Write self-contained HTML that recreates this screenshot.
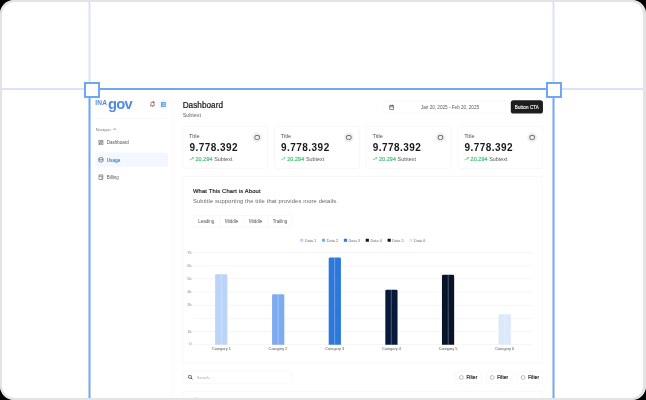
<!DOCTYPE html>
<html><head><meta charset="utf-8">
<style>
*{box-sizing:border-box;margin:0;padding:0}
html,body{width:646px;height:400px;overflow:hidden;background:#000}
body{position:relative;font-family:"Liberation Sans",sans-serif}
.frame{position:absolute;left:0;top:0;width:646px;height:400px;border-radius:14px;background:#e3e3e3;overflow:hidden}
.inner{position:absolute;left:2px;top:2px;right:3px;bottom:2px;border-radius:12px;background:#fff}
.bord{position:absolute;left:0;top:0;width:646px;height:400px;border-radius:14px;border:2px solid #e3e3e3;border-right-width:3px}
.app{position:absolute;left:90px;top:90px;width:1440px;height:1000px;transform-origin:0 0;transform:scale(0.3217);color:#1a1a1a}
.abs{position:absolute}
.side{position:absolute;left:0;top:0;width:256px;height:1000px;border-right:1px solid #f0f0f0}
.card{position:absolute;border:1px solid #e6e6e6;border-radius:8px;background:#fff}
</style></head>
<body>
<div class="frame">
<div class="inner"></div>
<div class="app">
  <div class="side">
    <div class="abs" style="left:16.5px;top:30.5px;font-weight:700;font-size:20.5px;letter-spacing:0.4px;color:#4f8ae6;line-height:20px">INA</div>
    <div class="abs" style="left:56px;top:19px;font-weight:700;font-size:46px;letter-spacing:-2.6px;color:#4f8ae6;line-height:46px">gov</div>
    <!-- bell -->
    <svg class="abs" style="left:184px;top:33px" width="20" height="22" viewBox="0 0 20 22">
      <path d="M5 14 V9.5 a5 5 0 0 1 10 0 V14 L16.5 16 H3.5 L5 14 M8.2 18.5 h3.6" fill="none" stroke="#333" stroke-width="1.7" stroke-linejoin="round"/>
      <circle cx="13.5" cy="5" r="3" fill="#ef2b2b"/>
    </svg>
    <div class="abs" style="left:214px;top:31px;width:27px;height:27px;border-radius:5px;background:#f2f6fe"></div>
    <svg class="abs" style="left:220px;top:37px" width="16" height="16" viewBox="0 0 16 16">
      <rect x="0" y="0" width="16" height="16" rx="2" fill="#72a3ea"/>
      <rect x="6" y="5" width="6" height="2" fill="#fff"/>
      <rect x="6" y="10.5" width="7" height="2" fill="#fff"/>
    </svg>
    <div class="abs" style="left:16px;top:88px;width:224px;height:1px;background:#ececec"></div>
    <div class="abs" style="left:18px;top:116px;font-size:12px;color:#777;line-height:14px">Navigasi</div>
    <svg class="abs" style="left:70px;top:118px" width="14" height="8" viewBox="0 0 14 8"><path d="M2 6.5 L7 2 L12 6.5" fill="none" stroke="#666" stroke-width="2"/></svg>
    <!-- nav -->
    <svg class="abs" style="left:25px;top:154px" width="18" height="18" viewBox="0 0 24 24"><g fill="none" stroke="#555" stroke-width="2.6" stroke-linejoin="round"><rect x="3" y="3" width="7" height="9" rx="1"/><rect x="14" y="3" width="7" height="5" rx="1"/><rect x="14" y="12" width="7" height="9" rx="1"/><rect x="3" y="16" width="7" height="5" rx="1"/></g></svg>
    <div class="abs" style="left:52px;top:154px;font-size:14px;color:#555;line-height:16px">Dashboard</div>
    <div class="abs" style="left:17px;top:194px;width:225px;height:45px;border-radius:8px;background:#f3f7fe"></div>
    <svg class="abs" style="left:25px;top:208px" width="18" height="18" viewBox="0 0 24 24"><g fill="none" stroke="#444" stroke-width="2.8"><rect x="3" y="2.5" width="18" height="19" rx="7"/><path d="M3 12H21"/></g></svg>
    <div class="abs" style="left:52px;top:211px;font-size:14px;font-weight:700;color:#3b7ddd;line-height:16px">Usage</div>
    <svg class="abs" style="left:26px;top:262px" width="16" height="18" viewBox="0 0 21 24"><g fill="none" stroke="#555" stroke-width="2.8"><rect x="2" y="2" width="17" height="20" rx="1.5"/><path d="M2 8H19 M11 15H19"/></g></svg>
    <div class="abs" style="left:52px;top:263px;font-size:14px;color:#555;line-height:16px">Billing</div>
  </div>

  <!-- header -->
  <div class="abs" style="left:288px;top:33px;font-size:25.5px;font-weight:400;letter-spacing:0.1px;-webkit-text-stroke:0.7px #1a1a1a;line-height:28px;color:#1a1a1a">Dashboard</div>
  <div class="abs" style="left:288px;top:70px;font-size:16.8px;line-height:18px;color:#666">Subtext</div>
  <div class="abs" style="left:913px;top:32px;width:380px;height:40px;border:1px solid #ececec;border-radius:8px"></div>
  <svg class="abs" style="left:930px;top:45px" width="15" height="17" viewBox="0 0 15 17"><rect x="1" y="3" width="13" height="13" rx="2" fill="none" stroke="#333" stroke-width="2"/><path d="M1 7.5H14 M4.5 0V4 M10.5 0V4" stroke="#333" stroke-width="2"/></svg>
  <div class="abs" style="left:945px;top:46px;width:348px;text-align:center;font-size:14.4px;line-height:16px;color:#555">Jan 20, 2025 - Feb 20, 2025</div>
  <div class="abs" style="left:1308px;top:32px;width:100px;height:41px;border-radius:8px;background:#1e1e1e"></div><div class="abs" style="left:1308px;top:32px;width:100px;height:41px;color:#fff;font-size:14px;line-height:45px;text-align:center;-webkit-text-stroke:0.35px #fff;letter-spacing:0.35px;filter:grayscale(1)">Button CTA</div>

  <!-- stat cards -->
  <div class="card" style="left:288px;top:112.7px;width:265px;height:131.3px"></div>
  <div class="card" style="left:573px;top:112.7px;width:265px;height:131.3px"></div>
  <div class="card" style="left:858px;top:112.7px;width:265px;height:131.3px"></div>
  <div class="card" style="left:1143px;top:112.7px;width:265px;height:131.3px"></div>
    <div class="abs" style="left:308px;top:134px;font-size:17.5px;line-height:18px;color:#555">Title</div>
  <div class="abs" style="left:504px;top:132px;width:31px;height:31px;border-radius:50%;background:#efefef"></div>
  <div class="abs" style="left:511px;top:140px;width:17px;height:15px;border-radius:50%;border:2.2px solid #555"></div>
  <div class="abs" style="left:309px;top:164.4px;font-size:31.1px;font-weight:700;letter-spacing:1.4px;line-height:30px;color:#1a1a1a">9.778.392</div>
  <svg class="abs" style="left:308px;top:208px" width="15" height="12" viewBox="0 0 15 12"><path d="M1 11 L5 6 L8 8 L13 2 M9 2 H13 V6" fill="none" stroke="#3cc26a" stroke-width="2"/></svg>
  <div class="abs" style="left:328px;top:206px;font-size:16.8px;line-height:18px;font-weight:400;-webkit-text-stroke:0.5px #3cc26a;letter-spacing:0.3px;color:#3cc26a">20.294 <span style="-webkit-text-stroke:0;letter-spacing:0;color:#555">Subtext</span></div>
  <div class="abs" style="left:593px;top:134px;font-size:17.5px;line-height:18px;color:#555">Title</div>
  <div class="abs" style="left:789px;top:132px;width:31px;height:31px;border-radius:50%;background:#efefef"></div>
  <div class="abs" style="left:796px;top:140px;width:17px;height:15px;border-radius:50%;border:2.2px solid #555"></div>
  <div class="abs" style="left:594px;top:164.4px;font-size:31.1px;font-weight:700;letter-spacing:1.4px;line-height:30px;color:#1a1a1a">9.778.392</div>
  <svg class="abs" style="left:593px;top:208px" width="15" height="12" viewBox="0 0 15 12"><path d="M1 11 L5 6 L8 8 L13 2 M9 2 H13 V6" fill="none" stroke="#3cc26a" stroke-width="2"/></svg>
  <div class="abs" style="left:613px;top:206px;font-size:16.8px;line-height:18px;font-weight:400;-webkit-text-stroke:0.5px #3cc26a;letter-spacing:0.3px;color:#3cc26a">20.294 <span style="-webkit-text-stroke:0;letter-spacing:0;color:#555">Subtext</span></div>
  <div class="abs" style="left:878px;top:134px;font-size:17.5px;line-height:18px;color:#555">Title</div>
  <div class="abs" style="left:1074px;top:132px;width:31px;height:31px;border-radius:50%;background:#efefef"></div>
  <div class="abs" style="left:1081px;top:140px;width:17px;height:15px;border-radius:50%;border:2.2px solid #555"></div>
  <div class="abs" style="left:879px;top:164.4px;font-size:31.1px;font-weight:700;letter-spacing:1.4px;line-height:30px;color:#1a1a1a">9.778.392</div>
  <svg class="abs" style="left:878px;top:208px" width="15" height="12" viewBox="0 0 15 12"><path d="M1 11 L5 6 L8 8 L13 2 M9 2 H13 V6" fill="none" stroke="#3cc26a" stroke-width="2"/></svg>
  <div class="abs" style="left:898px;top:206px;font-size:16.8px;line-height:18px;font-weight:400;-webkit-text-stroke:0.5px #3cc26a;letter-spacing:0.3px;color:#3cc26a">20.294 <span style="-webkit-text-stroke:0;letter-spacing:0;color:#555">Subtext</span></div>
  <div class="abs" style="left:1163px;top:134px;font-size:17.5px;line-height:18px;color:#555">Title</div>
  <div class="abs" style="left:1359px;top:132px;width:31px;height:31px;border-radius:50%;background:#efefef"></div>
  <div class="abs" style="left:1366px;top:140px;width:17px;height:15px;border-radius:50%;border:2.2px solid #555"></div>
  <div class="abs" style="left:1164px;top:164.4px;font-size:31.1px;font-weight:700;letter-spacing:1.4px;line-height:30px;color:#1a1a1a">9.778.392</div>
  <svg class="abs" style="left:1163px;top:208px" width="15" height="12" viewBox="0 0 15 12"><path d="M1 11 L5 6 L8 8 L13 2 M9 2 H13 V6" fill="none" stroke="#3cc26a" stroke-width="2"/></svg>
  <div class="abs" style="left:1183px;top:206px;font-size:16.8px;line-height:18px;font-weight:400;-webkit-text-stroke:0.5px #3cc26a;letter-spacing:0.3px;color:#3cc26a">20.294 <span style="-webkit-text-stroke:0;letter-spacing:0;color:#555">Subtext</span></div>

  <!-- chart card -->
  <div class="card" style="left:288px;top:268px;width:1120px;height:582px"></div>
  <div class="abs" style="left:320px;top:302.8px;font-size:18px;font-weight:400;letter-spacing:0.5px;-webkit-text-stroke:0.55px #1a1a1a;line-height:20px;color:#1a1a1a">What This Chart is About</div>
  <div class="abs" style="left:320px;top:335px;font-size:18px;letter-spacing:0.4px;line-height:20px;color:#666">Subtitle supporting the title that provides more details.</div>
  <div class="abs" style="left:320px;top:390px;width:309px;height:37px;border:1px solid #ececec;border-radius:6px"></div>
  <div class="abs" style="left:403px;top:390px;width:1px;height:37px;background:#ececec"></div>
  <div class="abs" style="left:478px;top:390px;width:1px;height:37px;background:#ececec"></div>
  <div class="abs" style="left:552px;top:390px;width:1px;height:37px;background:#ececec"></div>
  <div class="abs" style="left:320px;top:401px;width:83px;text-align:center;font-size:14px;line-height:16px;color:#555">Leading</div>
  <div class="abs" style="left:403px;top:401px;width:75px;text-align:center;font-size:14px;line-height:16px;color:#555">Middle</div>
  <div class="abs" style="left:478px;top:401px;width:74px;text-align:center;font-size:14px;line-height:16px;color:#555">Middle</div>
  <div class="abs" style="left:552px;top:401px;width:77px;text-align:center;font-size:14px;line-height:16px;color:#555">Trailing</div>
    <div class="abs" style="left:320px;top:790.3px;width:1057px;height:2px;background:#f1f1f1"></div>
  <div class="abs" style="left:270px;top:782.3px;width:46px;text-align:right;font-size:13px;line-height:16px;color:#8a8a8a">0</div>
  <div class="abs" style="left:320px;top:749.5px;width:1057px;height:2px;background:#f1f1f1"></div>
  <div class="abs" style="left:270px;top:741.5px;width:46px;text-align:right;font-size:13px;line-height:16px;color:#8a8a8a">1k</div>
  <div class="abs" style="left:320px;top:708.7px;width:1057px;height:2px;background:#f1f1f1"></div>
  <div class="abs" style="left:320px;top:667.9px;width:1057px;height:2px;background:#f1f1f1"></div>
  <div class="abs" style="left:270px;top:659.9px;width:46px;text-align:right;font-size:13px;line-height:16px;color:#8a8a8a">3k</div>
  <div class="abs" style="left:320px;top:627.1px;width:1057px;height:2px;background:#f1f1f1"></div>
  <div class="abs" style="left:270px;top:619.1px;width:46px;text-align:right;font-size:13px;line-height:16px;color:#8a8a8a">4k</div>
  <div class="abs" style="left:320px;top:586.3px;width:1057px;height:2px;background:#f1f1f1"></div>
  <div class="abs" style="left:270px;top:578.3px;width:46px;text-align:right;font-size:13px;line-height:16px;color:#8a8a8a">5k</div>
  <div class="abs" style="left:320px;top:545.6px;width:1057px;height:2px;background:#f1f1f1"></div>
  <div class="abs" style="left:270px;top:537.6px;width:46px;text-align:right;font-size:13px;line-height:16px;color:#8a8a8a">6k</div>
  <div class="abs" style="left:320px;top:504.8px;width:1057px;height:2px;background:#f1f1f1"></div>
  <div class="abs" style="left:270px;top:496.8px;width:46px;text-align:right;font-size:13px;line-height:16px;color:#8a8a8a">7k</div>
  <div class="abs" style="left:389.3px;top:573.2px;width:38px;height:218.6px;background:#bcd4f7;border-radius:4px 4px 0 0"><div style="position:absolute;left:17.5px;top:0;width:3px;bottom:0;background:rgba(255,255,255,0.3)"></div></div>
  <div class="abs" style="left:348.3px;top:797px;width:120px;text-align:center;font-size:12px;line-height:14px;color:#555">Category 1</div>
  <div class="abs" style="left:565.5px;top:634.8px;width:38px;height:157.0px;background:#7eaaf0;border-radius:4px 4px 0 0"><div style="position:absolute;left:17.5px;top:0;width:3px;bottom:0;background:rgba(255,255,255,0.3)"></div></div>
  <div class="abs" style="left:524.5px;top:797px;width:120px;text-align:center;font-size:12px;line-height:14px;color:#555">Category 2</div>
  <div class="abs" style="left:741.7px;top:521.3px;width:38px;height:270.5px;background:#2e78dc;border-radius:4px 4px 0 0"><div style="position:absolute;left:17.5px;top:0;width:3px;bottom:0;background:rgba(255,255,255,0.3)"></div></div>
  <div class="abs" style="left:700.7px;top:797px;width:120px;text-align:center;font-size:12px;line-height:14px;color:#555">Category 3</div>
  <div class="abs" style="left:917.9px;top:621px;width:38px;height:170.8px;background:#061a3c;border-radius:4px 4px 0 0"><div style="position:absolute;left:17.5px;top:0;width:3px;bottom:0;background:rgba(255,255,255,0.3)"></div></div>
  <div class="abs" style="left:876.9px;top:797px;width:120px;text-align:center;font-size:12px;line-height:14px;color:#555">Category 4</div>
  <div class="abs" style="left:1094.1px;top:573.5px;width:38px;height:218.3px;background:#07142a;border-radius:4px 4px 0 0"><div style="position:absolute;left:17.5px;top:0;width:3px;bottom:0;background:rgba(255,255,255,0.3)"></div></div>
  <div class="abs" style="left:1053.1px;top:797px;width:120px;text-align:center;font-size:12px;line-height:14px;color:#555">Category 5</div>
  <div class="abs" style="left:1270.3px;top:696.6px;width:38px;height:95.2px;background:#dce8fb;border-radius:4px 4px 0 0"><div style="position:absolute;left:17.5px;top:0;width:3px;bottom:0;background:rgba(255,255,255,0.3)"></div></div>
  <div class="abs" style="left:1229.3px;top:797px;width:120px;text-align:center;font-size:12px;line-height:14px;color:#555">Category 6</div>

  <div class="abs" style="left:653.0px;top:461.5px;width:10px;height:10px;border-radius:1px;background:#bcd4f7"></div>
  <div class="abs" style="left:668.0px;top:460.5px;font-size:12px;line-height:14px;color:#6a6a6a">Data 1</div>
  <div class="abs" style="left:720.9px;top:461.5px;width:10px;height:10px;border-radius:1px;background:#7eaaf0"></div>
  <div class="abs" style="left:735.9px;top:460.5px;font-size:12px;line-height:14px;color:#6a6a6a">Data 2</div>
  <div class="abs" style="left:788.8px;top:461.5px;width:10px;height:10px;border-radius:1px;background:#2e78dc"></div>
  <div class="abs" style="left:803.8px;top:460.5px;font-size:12px;line-height:14px;color:#6a6a6a">Data 3</div>
  <div class="abs" style="left:856.7px;top:461.5px;width:10px;height:10px;border-radius:1px;background:#061a3c"></div>
  <div class="abs" style="left:871.7px;top:460.5px;font-size:12px;line-height:14px;color:#6a6a6a">Data 4</div>
  <div class="abs" style="left:924.6px;top:461.5px;width:10px;height:10px;border-radius:1px;background:#07142a"></div>
  <div class="abs" style="left:939.6px;top:460.5px;font-size:12px;line-height:14px;color:#6a6a6a">Data 5</div>
  <div class="abs" style="left:992.5px;top:461.5px;width:10px;height:10px;border-radius:1px;background:#dce8fb"></div>
  <div class="abs" style="left:1007.5px;top:460.5px;font-size:12px;line-height:14px;color:#6a6a6a">Data 6</div>
  <!-- search & filters -->
  <div class="abs" style="left:289px;top:874px;width:340px;height:38px;border:1px solid #e8e8e8;border-radius:8px"></div>
  <svg class="abs" style="left:304px;top:885px" width="16" height="16" viewBox="0 0 16 16"><circle cx="6.5" cy="6.5" r="5" fill="none" stroke="#222" stroke-width="2"/><path d="M10 10 L15 15" stroke="#222" stroke-width="2.4"/></svg>
  <div class="abs" style="left:332px;top:886px;font-size:12px;letter-spacing:0.1px;line-height:16px;color:#aaa">Search...</div>
    <div class="abs" style="left:1136px;top:874px;width:80px;height:39px;border:1px solid #ececec;border-radius:8px"></div>
  <div class="abs" style="left:1148px;top:887px;width:13px;height:13px;border-radius:50%;border:1.7px solid #333"></div>
  <div class="abs" style="left:1170px;top:886px;font-size:14px;font-weight:400;-webkit-text-stroke:0.55px #222;letter-spacing:0.5px;line-height:16px;color:#222">Filter</div>
  <div class="abs" style="left:1232px;top:874px;width:80px;height:39px;border:1px solid #ececec;border-radius:8px"></div>
  <div class="abs" style="left:1244px;top:887px;width:13px;height:13px;border-radius:50%;border:1.7px solid #333"></div>
  <div class="abs" style="left:1266px;top:886px;font-size:14px;font-weight:400;-webkit-text-stroke:0.55px #222;letter-spacing:0.5px;line-height:16px;color:#222">Filter</div>
  <div class="abs" style="left:1328px;top:874px;width:80px;height:39px;border:1px solid #ececec;border-radius:8px"></div>
  <div class="abs" style="left:1340px;top:887px;width:13px;height:13px;border-radius:50%;border:1.7px solid #333"></div>
  <div class="abs" style="left:1362px;top:886px;font-size:14px;font-weight:400;-webkit-text-stroke:0.55px #222;letter-spacing:0.5px;line-height:16px;color:#222">Filter</div>
  <div class="card" style="left:288px;top:936px;width:1120px;height:300px"></div>
  <div class="abs" style="left:321px;top:956px;width:14px;height:14px;border:1.5px solid #ccc;border-radius:3px"></div>
</div>
<svg class="abs" style="position:absolute;left:0;top:0" width="646" height="400" viewBox="0 0 646 400">
  <!-- guides -->
  <line x1="0" y1="89" x2="84" y2="89" stroke="#dbe2fb" stroke-width="2"/>
  <line x1="562" y1="89" x2="646" y2="89" stroke="#dbe2fb" stroke-width="2"/>
  <line x1="89.5" y1="0" x2="89.5" y2="82" stroke="#dbe2fb" stroke-width="2"/>
  <line x1="553.5" y1="0" x2="553.5" y2="82" stroke="#dbe2fb" stroke-width="2"/>
  <!-- selection -->
  <line x1="100" y1="89" x2="546" y2="89" stroke="#70a6f6" stroke-width="2"/>
  <line x1="89.5" y1="98" x2="89.5" y2="400" stroke="#70a6f6" stroke-width="2"/>
  <line x1="553.5" y1="98" x2="553.5" y2="400" stroke="#70a6f6" stroke-width="2"/>
  <rect x="85" y="83" width="14" height="14" fill="#fff" stroke="#70a6f6" stroke-width="2"/>
  <rect x="547" y="83" width="14" height="14" fill="#fff" stroke="#70a6f6" stroke-width="2"/>
</svg>
<div class="bord"></div>
</div>
</body></html>
